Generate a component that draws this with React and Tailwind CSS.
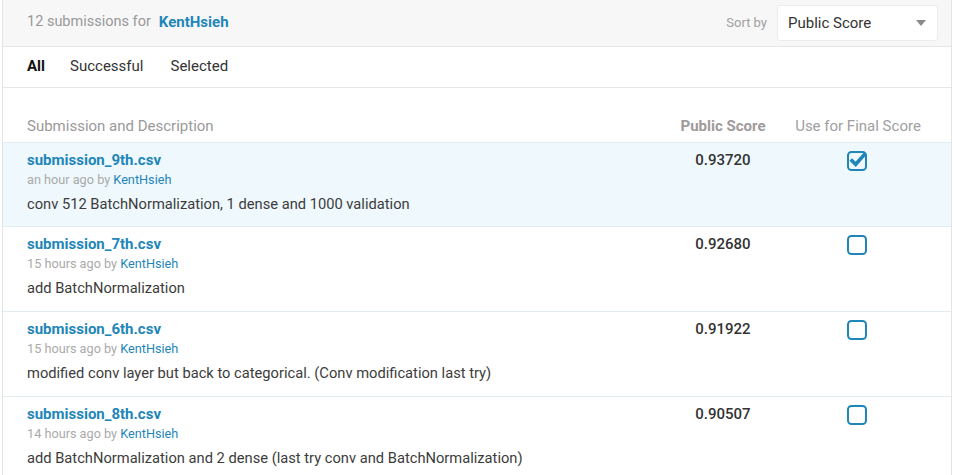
import React from "react";

const rows = [
  { name: "submission_9th.csv", time: "an hour ago", desc: "conv 512 BatchNormalization, 1 dense and 1000 validation", score: "0.93720", checked: true },
  { name: "submission_7th.csv", time: "15 hours ago", desc: "add BatchNormalization", score: "0.92680", checked: false },
  { name: "submission_6th.csv", time: "15 hours ago", desc: "modified conv layer but back to categorical. (Conv modification last try)", score: "0.91922", checked: false },
  { name: "submission_8th.csv", time: "14 hours ago", desc: "add BatchNormalization and 2 dense (last try conv and BatchNormalization)", score: "0.90507", checked: false },
];

function Checkbox({ checked }) {
  return (
    <svg width="20" height="20" viewBox="0 0 20 20" className="block">
      <rect x="1" y="1" width="18" height="18" rx="3.5" fill="none" stroke="#1f86b9" strokeWidth="2" />
      {checked && (
        <path d="M5 9.7 L8.7 13.3 L17 4" fill="none" stroke="#1f86b9" strokeWidth="3.6" strokeLinecap="square" strokeLinejoin="miter" />
      )}
    </svg>
  );
}

export default function App() {
  return (
    <div className="w-[955px] h-[475px] bg-white overflow-hidden" style={{ fontFamily: "Roboto, 'Liberation Sans', sans-serif" }}>
      <div className="ml-[2px] w-[950px] h-full border-x border-[#e4e4e4]">
        <div className="h-[47px] bg-[#f7f7f7] border-b border-[#e6e6e6] flex items-center pl-[24px] pr-[13px] pb-[2px]">
          <span className="text-[14.5px] text-[#999]">12 submissions for</span>
          <span className="text-[15px] font-bold text-[#1f86b9] ml-[8px]">KentHsieh</span>
          <div className="ml-auto flex items-center pt-[2px]">
            <span className="text-[13px] text-[#a0a0a0] mr-[10px]">Sort by</span>
            <div className="w-[161px] h-[36px] bg-white border border-[#ececec] rounded-[3px] flex items-center pl-[10px] pr-[11px]">
              <span className="text-[15px] text-[#333]">Public Score</span>
              <svg width="10" height="6" viewBox="0 0 10 6" className="ml-auto"><path d="M0 0 L10 0 L5 6 Z" fill="#8a8a8a" /></svg>
            </div>
          </div>
        </div>
        <div className="h-[41px] border-b border-[#e6e6e6] flex items-center pl-[24px] text-[15px] pb-[1px]">
          <span className="font-bold text-[#111]">All</span>
          <span className="ml-[25px] text-[#333]">Successful</span>
          <span className="ml-[27px] text-[#333]">Selected</span>
        </div>
        <div className="h-[54px] flex items-end pb-[5px] pl-[24px] text-[15px]">
          <span className="text-[#9a9a9a] flex-1">Submission and Description</span>
          <span className="w-[110px] text-center font-bold text-[#a09a9a]">Public Score</span>
          <span className="w-[160px] text-center text-[#a0a0a0] mr-[13px]">Use for Final Score</span>
        </div>
        {rows.map((r, i) => (
          <div key={i} className={`${i === 0 ? "h-[84px]" : "h-[85px]"} border-t border-[#e3ecf1] flex pl-[24px] pt-[8px] ${r.checked ? "bg-[#eef8fd]" : "bg-white"}`}>
            <div className="flex-1 flex flex-col">
              <span className="text-[15px] font-bold text-[#1f86b9] leading-[18px]">{r.name}</span>
              <span className="text-[12.7px] text-[#aaa] leading-[18px] mt-[2px]">
                {r.time} by <span className="text-[#1f86b9]">KentHsieh</span>
              </span>
              <span className="text-[14.7px] text-[#3c3c3c] leading-[18px] mt-[6px]">{r.desc}</span>
            </div>
            <div className="w-[110px] text-center text-[15px] font-medium text-[#333] leading-[18px]">{r.score}</div>
            <div className="w-[160px] mr-[13px] flex justify-center pr-[2px]">
              <Checkbox checked={r.checked} />
            </div>
          </div>
        ))}
      </div>
    </div>
  );
}
